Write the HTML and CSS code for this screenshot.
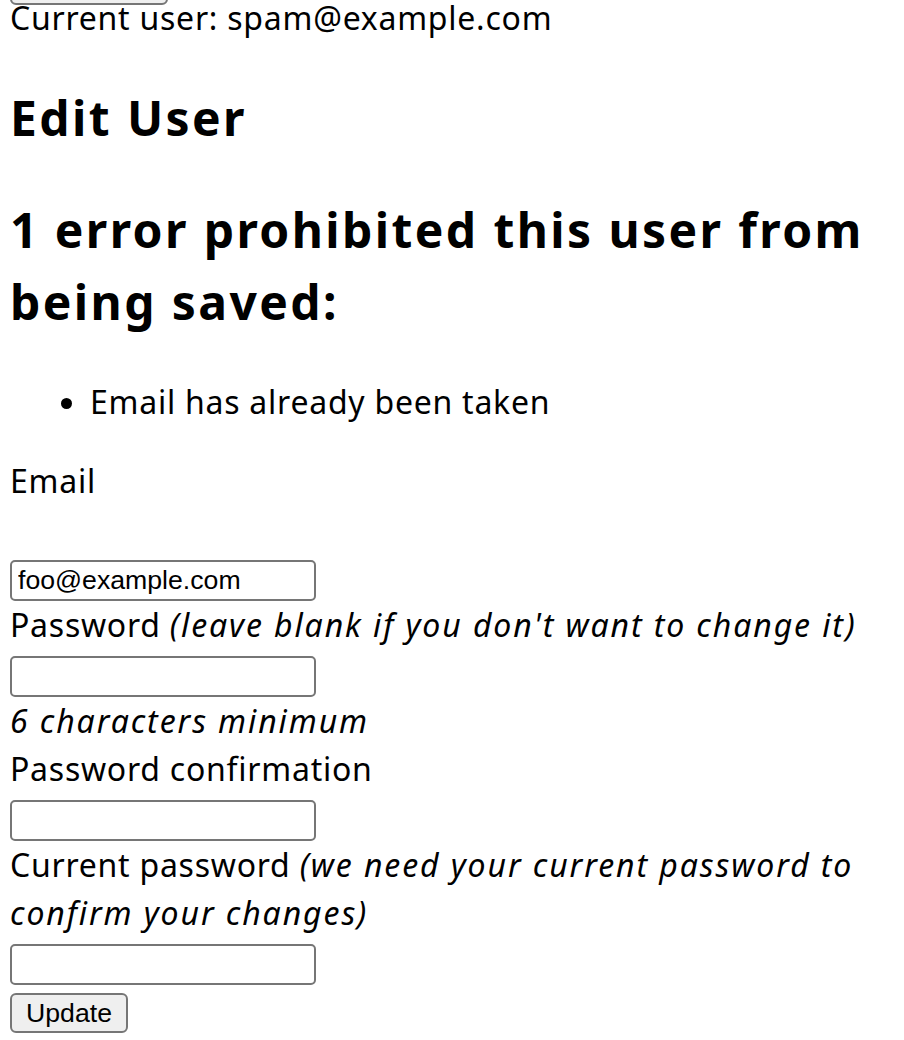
FILE: index.html
```html
<!DOCTYPE html>
<html lang="en">
<head>
    <meta charset="UTF-8">
    <meta name="viewport" content="width=device-width, initial-scale=1.0">
    <title>Edit User</title>
    <link rel="stylesheet" href="styles.css">
</head>
<body>
    <div class="session">
        <button class="logout-btn">Sign out</button>
        <p class="current-user">Current user: spam@example.com</p>
    </div>

    <h2>Edit User</h2>

    <div id="error_explanation">
        <h2>1 error prohibited this user from being saved:</h2>
        <ul>
            <li>Email has already been taken</li>
        </ul>
    </div>

    <form class="edit-user" action="#" method="post">
        <div class="field">
            <label for="user_email" class="label-gap">Email</label>
            <input type="email" id="user_email" value="foo@example.com">
        </div>

        <div class="field">
            <label for="user_password">Password <i>(leave blank if you don't want to change it)</i></label>
            <input type="password" id="user_password">
            <em class="hint">6 characters minimum</em>
        </div>

        <div class="field">
            <label for="user_password_confirmation">Password confirmation</label>
            <input type="password" id="user_password_confirmation">
        </div>

        <div class="field">
            <label for="user_current_password">Current password <i>(we need your current password to confirm your changes)</i></label>
            <input type="password" id="user_current_password">
        </div>

        <div class="actions">
            <button type="submit" class="update-btn">Update</button>
        </div>
    </form>
</body>
</html>
```

FILE: styles.css
```css
 body{
   margin: 0 10px;
   font-family: "Noto Sans", sans-serif;
   font-size: 32px;
   line-height: 48px;
   letter-spacing: 0.75px;
   color: #000;
   background-color: #fff;
 }

 i, em{
   letter-spacing: 1.9px;
 }

 .session{
   margin-top: -35px;
 }

 .logout-btn{
   display: block;
   width: 158px;
   height: 40px;
 }

 .current-user{
   margin: -11px 0 0 0;
 }

 h2{
   font-size: 48px;
   line-height: 72px;
   letter-spacing: 2.4px;
   margin: 40px 0;
 }

 ul{
   margin: 39px 0 31px 0;
   padding-left: 80px;
 }

 .field label{
   display: block;
 }

 .label-gap{
   padding-bottom: 48px;
 }

 .hint{
   display: block;
 }

 input[type="email"],
 input[type="password"]{
   display: block;
   box-sizing: border-box;
   width: 306px;
   height: 41px;
   margin: 7px 0 0 0;
   padding: 2px 6px;
   font-family: "Liberation Sans", Arial, sans-serif;
   font-size: 26.67px;
   letter-spacing: 0;
   border: 2px solid #767676;
   border-radius: 5px;
   background-color: #fff;
 }

 button{
   box-sizing: border-box;
   font-family: "Liberation Sans", Arial, sans-serif;
   font-size: 26.67px;
   letter-spacing: 0;
   background-color: #efefef;
   border: 2px solid #767676;
   border-radius: 6px;
   padding: 2px 12px;
   color: #000;
 }

 .actions{
   padding-top: 8px;
 }

 .update-btn{
   display: block;
   width: 118px;
   height: 40px;
 }
```
